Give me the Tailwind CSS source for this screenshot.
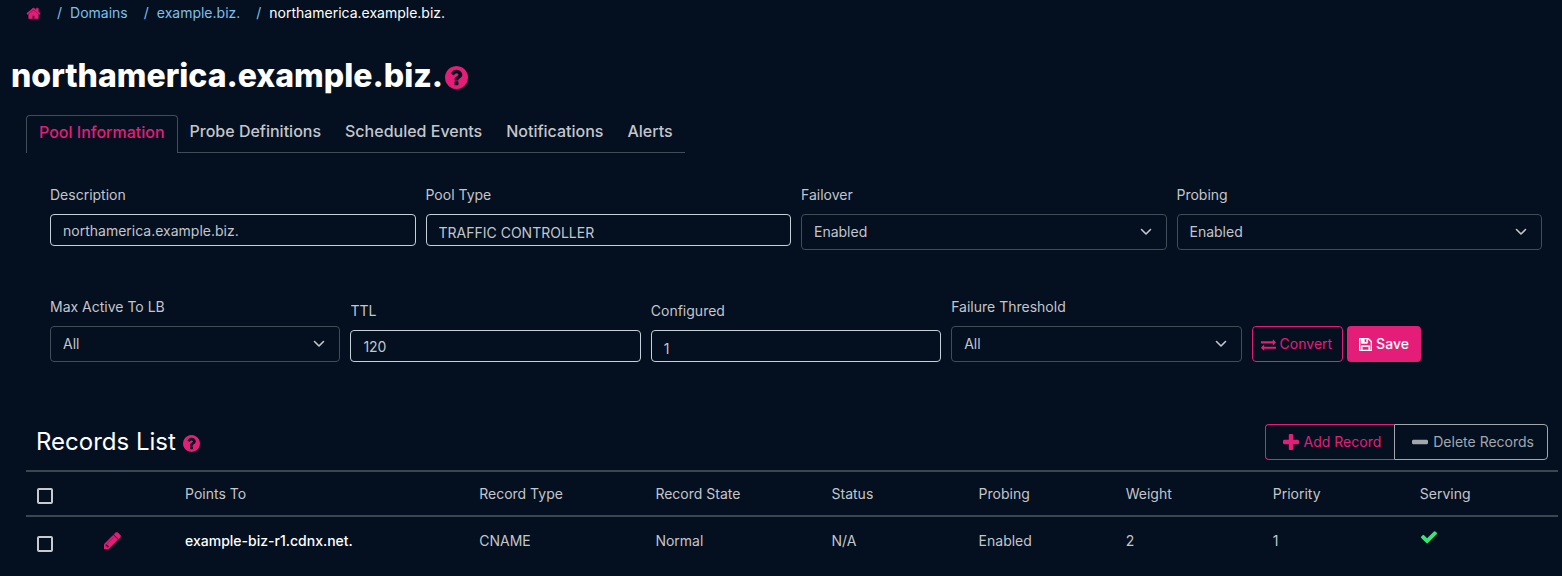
<!DOCTYPE html>
<html lang="en">
  <head>
    <meta charset="UTF-8" />
    <meta name="viewport" content="width=device-width, initial-scale=1.0" />
    <title>northamerica.example.biz.</title>
    <script src="https://cdn.jsdelivr.net/npm/@tailwindcss/browser@4"></script>
  </head>
  <body
    class="min-h-screen bg-[#040f1f] font-['Inter',sans-serif] text-[14px] leading-5 text-[#c3c6cc]"
  >
    <!-- Icons -->
    <svg class="hidden">
      <symbol id="icon-home" viewBox="0 0 1792 1792">
        <path
          d="M1472 992v480q0 26-19 45t-45 19h-384v-384h-256v384h-384q-26 0-45-19t-19-45v-480q0-1 .5-3t.5-3l575-474 575 474q1 2 1 6zm223-69l-62 74q-8 9-21 11h-3q-13 0-21-7l-692-577-692 577q-12 8-24 7-13-2-21-11l-62-74q-8-10-7-23.5t11-21.5l719-599q32-26 76-26t76 26l244 204v-195q0-14 9-23t23-9h192q14 0 23 9t9 23v408l219 182q10 8 11 21.5t-7 23.5z"
          stroke="currentColor"
          stroke-width="60"
        />
      </symbol>
      <symbol id="icon-question" viewBox="128 128 1536 1536">
        <path
          d="M1024 1376v-192q0-14-9-23t-23-9h-192q-14 0-23 9t-9 23v192q0 14 9 23t23 9h192q14 0 23-9t9-23zm256-672q0-88-55.5-163t-138.5-116-170-41q-243 0-371 213-15 24 8 42l132 100q7 6 19 6 16 0 25-12 53-68 86-92 34-24 86-24 48 0 85.5 26t37.5 59q0 38-20 61t-68 45q-63 28-115.5 86.5t-52.5 125.5v36q0 14 9 23t23 9h192q14 0 23-9t9-23q0-19 21.5-49.5t54.5-49.5q32-18 49-28.5t46-35 44.5-48 28-60.5 12.5-81zm384 192q0 209-103 385.5t-279.5 279.5-385.5 103-385.5-103-279.5-279.5-103-385.5 103-385.5 279.5-279.5 385.5-103 385.5 103 279.5 279.5 103 385.5z"
        />
      </symbol>
      <symbol id="icon-exchange" viewBox="0 0 1792 1792">
        <path
          d="M1792 1184v192q0 13-9.5 22.5t-22.5 9.5h-1376v192q0 13-9.5 22.5t-22.5 9.5q-12 0-24-10l-319-320q-9-9-9-22 0-14 9-23l320-320q9-9 23-9 13 0 22.5 9.5t9.5 22.5v192h1376q13 0 22.5 9.5t9.5 22.5zm0-544q0 14-9 23l-320 320q-9 9-23 9-13 0-22.5-9.5t-9.5-22.5v-192h-1376q-13 0-22.5-9.5t-9.5-22.5v-192q0-13 9.5-22.5t22.5-9.5h1376v-192q0-14 9-23t23-9q12 0 24 10l319 319q9 9 9 23z"
        />
      </symbol>
      <symbol id="icon-save" viewBox="128 128 1536 1536">
        <path
          d="M512 1536h768v-384h-768v384zm896 0h128v-896q0-14-10-38.5t-20-34.5l-281-281q-10-10-34-20t-39-10v416q0 40-28 68t-68 28h-576q-40 0-68-28t-28-68v-416h-128v1280h128v-416q0-40 28-68t68-28h832q40 0 68 28t28 68v416zm-384-928v-320q0-13-9.5-22.5t-22.5-9.5h-192q-13 0-22.5 9.5t-9.5 22.5v320q0 13 9.5 22.5t22.5 9.5h192q13 0 22.5-9.5t9.5-22.5zm640 32v928q0 40-28 68t-68 28h-1344q-40 0-68-28t-28-68v-1344q0-40 28-68t68-28h928q40 0 88 20t76 48l280 280q28 28 48 76t20 88z"
          stroke="currentColor"
          stroke-width="60"
        />
      </symbol>
      <symbol id="icon-plus" viewBox="192 128 1408 1408">
        <path
          d="M1600 736v192q0 40-28 68t-68 28h-416v416q0 40-28 68t-68 28h-192q-40 0-68-28t-28-68v-416h-416q-40 0-68-28t-28-68v-192q0-40 28-68t68-28h416v-416q0-40 28-68t68-28h192q40 0 68 28t28 68v416h416q40 0 68 28t28 68z"
        />
      </symbol>
      <symbol id="icon-minus" viewBox="192 128 1408 1408">
        <path
          d="M1600 736v192q0 40-28 68t-68 28h-1216q-40 0-68-28t-28-68v-192q0-40 28-68t68-28h1216q40 0 68 28t28 68z"
        />
      </symbol>
      <symbol id="icon-check" viewBox="121 128 1550 1550">
        <path
          d="M1671 566q0 40-28 68l-724 724-136 136q-28 28-68 28t-68-28l-136-136-362-362q-28-28-28-68t28-68l136-136q28-28 68-28t68 28l294 295 656-657q28-28 68-28t68 28l136 136q28 28 28 68z"
        />
      </symbol>
      <symbol id="icon-pencil" viewBox="128 128 1536 1536">
        <path
          d="M491 1536l91-91-235-235-91 91v107h128v128h107zm523-928q0-22-22-22-10 0-17 7l-542 542q-7 7-7 17 0 22 22 22 10 0 17-7l542-542q7-7 7-17zm-54-192l416 416-832 832h-416v-416zm683 96q0 53-37 90l-166 166-416-416 166-165q36-38 90-38 53 0 91 38l235 234q37 39 37 91z"
          stroke="currentColor"
          stroke-width="50"
        />
      </symbol>
      <symbol id="icon-chevron" viewBox="0 0 16 16">
        <path
          d="M3.5 5.5L8 10l4.5-4.5"
          fill="none"
          stroke="currentColor"
          stroke-width="1.6"
          stroke-linecap="round"
          stroke-linejoin="round"
        />
      </symbol>
    </svg>

    <!-- Breadcrumb -->
    <nav aria-label="Breadcrumb" class="pt-[3px] pl-[26px] text-[#7cc0ee]">
      <ol class="flex items-center gap-4">
        <li>
          <a href="#" aria-label="Home" class="block text-[#e41d79]">
            <svg class="h-[15px] w-[15px] fill-current"><use href="#icon-home" /></svg>
          </a>
        </li>
        <li class="flex gap-2"><span>/</span><a href="#">Domains</a></li>
        <li class="flex gap-2"><span>/</span><a href="#">example.biz.</a></li>
        <li class="flex gap-2">
          <span>/</span><span class="text-white">northamerica.example.biz.</span>
        </li>
      </ol>
    </nav>

    <h1
      class="mt-[33px] flex items-center gap-[2px] pl-[11px] text-[32px] leading-10 font-extrabold text-white"
    >
      northamerica.example.biz.
      <svg class="mt-[3px] h-[23px] w-[23px] fill-[#e41d79]"><use href="#icon-question" /></svg>
    </h1>

    <!-- Tabs -->
    <div class="mt-[19px] flex pl-[26px]">
      <div role="tablist" class="flex border-b border-[#414c59] text-[16px] leading-6 font-medium">
        <button
          role="tab"
          aria-selected="true"
          class="-mb-px h-[38px] rounded-t border border-b-0 border-[#414c59] bg-[#040f1f] px-3 pb-[5px] text-[#e41d79]"
        >
          Pool Information
        </button>
        <button role="tab" class="px-3 pb-[5px]">Probe Definitions</button>
        <button role="tab" class="px-3 pb-[5px]">Scheduled Events</button>
        <button role="tab" class="px-3 pb-[5px]">Notifications</button>
        <button role="tab" class="px-3 pb-[5px]">Alerts</button>
      </div>
    </div>

    <form class="pr-5 pl-[50px]">
      <div class="mt-8 grid grid-cols-4 items-start gap-[10px]">
        <div class="flex flex-col gap-[9px]">
          <label for="description">Description</label>
          <input
            id="description"
            type="text"
            value="northamerica.example.biz."
            class="h-8 w-full rounded border border-[#c6d0da] px-3"
          />
        </div>
        <div class="flex flex-col gap-[9px]">
          <label for="pool-type">Pool Type</label>
          <input
            id="pool-type"
            type="text"
            value="TRAFFIC CONTROLLER"
            readonly
            class="h-8 w-full rounded border border-[#c6d0da] px-3 pt-1"
          />
        </div>
        <div class="flex flex-col gap-[9px]">
          <label for="failover">Failover</label>
          <div class="relative">
            <select
              id="failover"
              class="h-9 w-full appearance-none rounded border border-[#414c59] px-3"
            >
              <option>Enabled</option>
              <option>Disabled</option>
            </select>
            <svg class="pointer-events-none absolute top-[10px] right-[13px] h-4 w-4">
              <use href="#icon-chevron" />
            </svg>
          </div>
        </div>
        <div class="flex flex-col gap-[9px]">
          <label for="probing">Probing</label>
          <div class="relative">
            <select
              id="probing"
              class="h-9 w-full appearance-none rounded border border-[#414c59] px-3"
            >
              <option>Enabled</option>
              <option>Disabled</option>
            </select>
            <svg class="pointer-events-none absolute top-[10px] right-[13px] h-4 w-4">
              <use href="#icon-chevron" />
            </svg>
          </div>
        </div>
      </div>

      <div class="mt-[47px] grid grid-cols-5 items-end gap-[10px]">
        <div class="flex flex-col gap-[9px]">
          <label for="max-active">Max Active To LB</label>
          <div class="relative">
            <select
              id="max-active"
              class="h-9 w-full appearance-none rounded border border-[#414c59] px-3"
            >
              <option>All</option>
            </select>
            <svg class="pointer-events-none absolute top-[10px] right-[13px] h-4 w-4">
              <use href="#icon-chevron" />
            </svg>
          </div>
        </div>
        <div class="flex flex-col gap-[9px]">
          <label for="ttl">TTL</label>
          <input
            id="ttl"
            type="text"
            value="120"
            class="h-8 w-full rounded border border-[#c6d0da] px-3"
          />
        </div>
        <div class="flex flex-col gap-[9px]">
          <label for="configured">Configured</label>
          <input
            id="configured"
            type="text"
            value="1"
            readonly
            class="h-8 w-full rounded border border-[#c6d0da] px-3 pt-1"
          />
        </div>
        <div class="flex flex-col gap-[9px]">
          <label for="failure-threshold">Failure Threshold</label>
          <div class="relative">
            <select
              id="failure-threshold"
              class="h-9 w-full appearance-none rounded border border-[#414c59] px-3"
            >
              <option>All</option>
            </select>
            <svg class="pointer-events-none absolute top-[10px] right-[13px] h-4 w-4">
              <use href="#icon-chevron" />
            </svg>
          </div>
        </div>
        <div class="flex gap-1">
          <button
            type="button"
            class="flex h-9 items-center gap-1 rounded border border-[#e41d79] pr-[10px] pl-2 text-[#e41d79]"
          >
            <svg class="h-[15px] w-[15px] fill-current"><use href="#icon-exchange" /></svg>
            Convert
          </button>
          <button
            type="submit"
            class="flex h-9 items-center gap-1 rounded bg-[#e41d79] px-3 font-medium text-white"
          >
            <svg class="h-[13px] w-[13px] fill-current"><use href="#icon-save" /></svg>
            Save
          </button>
        </div>
      </div>
    </form>

    <!-- Records -->
    <section class="mt-[62px] pr-1 pl-[26px]">
      <div class="flex items-center justify-between pr-[10px] pb-[10px] pl-[10px]">
        <h2 class="flex items-center gap-[7px] text-[24px] leading-8 text-white">
          Records List
          <svg class="mt-[3px] h-[17px] w-[17px] fill-[#e41d79]"><use href="#icon-question" /></svg>
        </h2>
        <div class="flex">
          <button
            type="button"
            class="flex h-9 items-center gap-[5px] rounded-l border border-r-0 border-[#e41d79] pr-[13px] pl-[17px] text-[#e41d79]"
          >
            <svg class="h-4 w-4 fill-current"><use href="#icon-plus" /></svg>
            Add Record
          </button>
          <button
            type="button"
            class="flex h-9 items-center gap-[5px] rounded-r border border-[#a2a7ae] pr-[13px] pl-[17px] text-[#a2a7ae]"
          >
            <svg class="h-4 w-4 fill-current"><use href="#icon-minus" /></svg>
            Delete Records
          </button>
        </div>
      </div>

      <table class="w-full table-fixed border-collapse text-left">
        <thead>
          <tr class="h-[45px] border-y-2 border-[#3a4650]">
            <th class="w-[4.4%] pt-1 pl-[11px]">
              <input
                type="checkbox"
                aria-label="Select all records"
                class="block h-4 w-4 appearance-none rounded-xs border-2 border-[#c6cad2]"
              />
            </th>
            <th class="w-[5.2%]"></th>
            <th class="w-[19.2%] pl-3 font-normal">Points To</th>
            <th class="w-[11.5%] pl-3 font-normal">Record Type</th>
            <th class="w-[11.5%] pl-3 font-normal">Record State</th>
            <th class="w-[9.6%] pl-3 font-normal">Status</th>
            <th class="w-[9.6%] pl-3 font-normal">Probing</th>
            <th class="w-[9.6%] pl-3 font-normal">Weight</th>
            <th class="w-[9.6%] pl-3 font-normal">Priority</th>
            <th class="pl-3 font-normal">Serving</th>
          </tr>
        </thead>
        <tbody>
          <tr class="h-12">
            <td class="pt-[7px] pl-[11px]">
              <input
                type="checkbox"
                aria-label="Select example-biz-r1.cdnx.net."
                class="block h-4 w-4 appearance-none rounded-xs border-2 border-[#c6cad2]"
              />
            </td>
            <td class="pl-[11px]">
              <button type="button" aria-label="Edit record" class="block text-[#e41d79]">
                <svg class="h-[17px] w-[17px] fill-current"><use href="#icon-pencil" /></svg>
              </button>
            </td>
            <td class="pl-3 font-medium text-white">example-biz-r1.cdnx.net.</td>
            <td class="pl-3">CNAME</td>
            <td class="pl-3">Normal</td>
            <td class="pl-3">N/A</td>
            <td class="pl-3">Enabled</td>
            <td class="pl-3">2</td>
            <td class="pl-3">1</td>
            <td class="pb-2 pl-3">
              <svg role="img" aria-label="Serving" class="ml-px h-4 w-4 fill-[#3be477]">
                <use href="#icon-check" />
              </svg>
            </td>
          </tr>
        </tbody>
      </table>
    </section>
  </body>
</html>
